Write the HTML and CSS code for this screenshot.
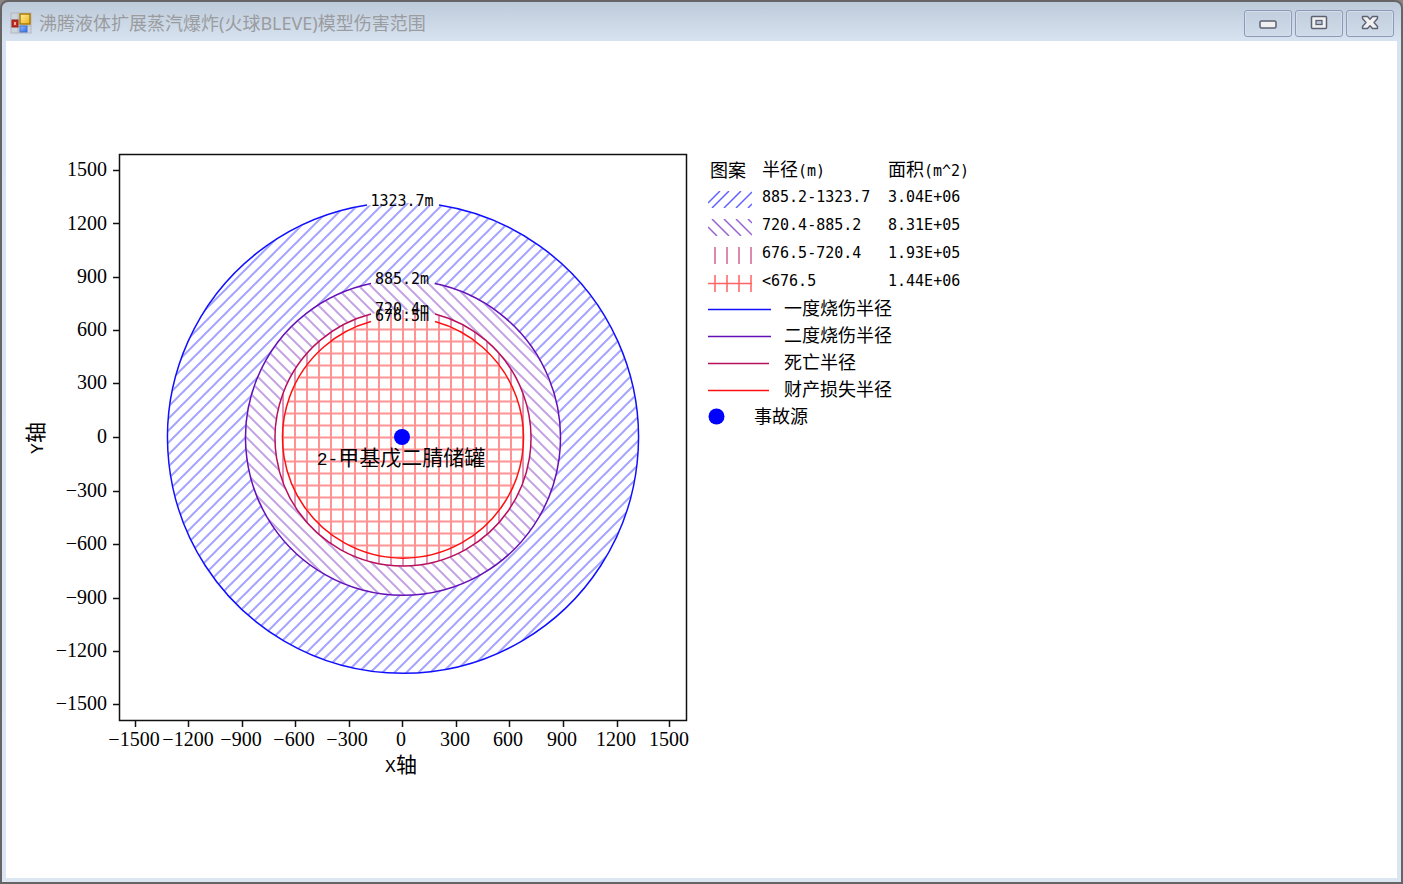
FILE: index.html
```html
<!DOCTYPE html>
<html lang="zh-CN">
<head>
<meta charset="utf-8">
<title>沸腾液体扩展蒸汽爆炸(火球BLEVE)模型伤害范围</title>
<link rel="stylesheet" href="styles.css">
</head>
<body>
<div class="window">
  <header class="titlebar">
    <svg class="app-icon" width="22" height="22" viewBox="0 0 22 22" aria-hidden="true">
      <defs>
        <linearGradient id="gold" x1="0" y1="0" x2="1" y2="1"><stop offset="0" stop-color="#fff0a0"/><stop offset="1" stop-color="#eeb010"/></linearGradient>
        <linearGradient id="sky" x1="0" y1="0" x2="1" y2="1"><stop offset="0" stop-color="#8fbcff"/><stop offset="1" stop-color="#2f6ae0"/></linearGradient>
      </defs>
      <rect x="1" y="1" width="20" height="20" fill="#ccd5de" stroke="#b3b6ba"/>
      <path d="M8 1v20M1 14h20" stroke="#b3b6ba"/>
      <rect x="10" y="2" width="10" height="10" fill="url(#gold)" stroke="#a87c08" stroke-width="1.5"/>
      <rect x="2" y="8" width="6" height="7" fill="#c02a20" stroke="#96201c"/>
      <rect x="4" y="10" width="2" height="3" fill="#f0a8a0"/>
      <rect x="10" y="14" width="7" height="6" fill="url(#sky)" stroke="#3c70d0"/>
    </svg>
    <h1 class="title">沸腾液体扩展蒸汽爆炸(火球BLEVE)模型伤害范围</h1>
    <div class="controls">
      <button class="control" type="button" aria-label="最小化">
        <svg width="18" height="16" viewBox="0 0 18 16"><rect x="1" y="6" width="16" height="7" rx="1.5" fill="#f0f0f0" stroke="#5e6172" stroke-width="1.5"/></svg>
      </button>
      <button class="control" type="button" aria-label="最大化">
        <svg width="18" height="16" viewBox="0 0 18 16"><rect x="1.500" y="1.500" width="15" height="12" rx="1" fill="#f0f0f0" stroke="#5e6172" stroke-width="1.5"/><rect x="6" y="5.500" width="6" height="4" fill="#b9c7d8" stroke="#5e6172" stroke-width="1.3"/></svg>
      </button>
      <button class="control" type="button" aria-label="关闭">
        <svg width="18" height="16" viewBox="0 0 18 16"><path d="M1.500 1.500H6.500L9 4.300 11.500 1.500H16.500V3.500L13 7.500 16.500 11.500V13.500H11.500L9 10.700 6.500 13.500H1.500V11.500L5 7.500 1.500 3.500Z" fill="#f0f0f0" stroke="#5e6172" stroke-width="1.4" stroke-linejoin="round"/></svg>
      </button>
    </div>
  </header>

  <main class="client">
    <svg class="chart" viewBox="20 150 670 630" role="img" aria-label="伤害范围图">
      <defs>
        <pattern id="h-first" x="11" width="12" height="12" patternUnits="userSpaceOnUse"><path class="hatch first" d="M-3 3L3 -3M-3 15L15 -3M9 15L15 9"/></pattern>
        <pattern id="h-second" x="1" width="12" height="12" patternUnits="userSpaceOnUse"><path class="hatch second" d="M-3 9L3 15M-3 -3L15 15M9 -3L15 3"/></pattern>
        <pattern id="h-death" x="1" width="12" height="12" patternUnits="userSpaceOnUse"><path class="hatch death" d="M6 0V12"/></pattern>
        <pattern id="h-loss" x="1" width="12" height="12" patternUnits="userSpaceOnUse"><path class="hatch loss" d="M6 0V12M0 5.500H12"/></pattern>
      </defs>

      <circle cx="403" cy="438" r="235" fill="url(#h-first)"/>
      <circle cx="403" cy="438" r="157" fill="#fff"/>
      <circle cx="403" cy="438" r="157" fill="url(#h-second)"/>
      <circle cx="403" cy="438" r="128" fill="#fff"/>
      <circle cx="403" cy="438" r="128" fill="url(#h-death)"/>
      <circle cx="403" cy="438" r="120" fill="#fff"/>
      <circle cx="403" cy="438" r="120" fill="url(#h-loss)"/>

      <g class="rings">
        <path class="first" d="M367 205A235.500 235.500 0 1 0 439 205"/>
        <path class="second" d="M371 283.500A157.500 157.500 0 1 0 435 283.500"/>
        <path class="death" d="M371 314A128 128 0 1 0 435 314"/>
        <path class="loss" d="M371 321.500A120.500 120.500 0 1 0 435 321.500"/>
      </g>

      <path class="axis" d="M119.500 154.500H686.500V720.500H119.500ZM113 170.500h6M113 223.500h6M113 277.500h6M113 330.500h6M113 383.500h6M113 437.500h6M113 491.500h6M113 544.500h6M113 598.500h6M113 651.500h6M113 704.500h6M135.500 721v6M188.500 721v6M242.500 721v6M295.500 721v6M349.500 721v6M402.500 721v6M456.500 721v6M509.500 721v6M563.500 721v6M617.500 721v6M669.500 721v6"/>

      <g class="ticks y">
        <text x="107" y="176">1500</text><text x="107" y="230">1200</text><text x="107" y="283">900</text><text x="107" y="336">600</text><text x="107" y="389">300</text><text x="107" y="443">0</text><text x="107" y="497">−300</text><text x="107" y="550">−600</text><text x="107" y="604">−900</text><text x="107" y="657">−1200</text><text x="107" y="710">−1500</text>
      </g>
      <g class="ticks">
        <text x="134" y="746">−1500</text><text x="188" y="746">−1200</text><text x="241" y="746">−900</text><text x="294" y="746">−600</text><text x="347" y="746">−300</text><text x="401" y="746">0</text><text x="455" y="746">300</text><text x="508" y="746">600</text><text x="562" y="746">900</text><text x="616" y="746">1200</text><text x="669" y="746">1500</text>
      </g>
      <text class="name" x="401" y="772"><tspan class="wide-mono">X</tspan>轴</text>
      <text class="name" transform="translate(43 438) rotate(-90)"><tspan class="wide-mono">Y</tspan>轴</text>

      <g class="radius">
        <text x="402" y="206">1323.7m</text><text x="402" y="284">885.2m</text><text x="402" y="314">720.4m</text><text x="402" y="321">676.5m</text>
      </g>
      <circle class="source" cx="402" cy="437" r="8"/>
      <text class="name" x="401" y="465"><tspan class="wide-mono">2-</tspan>甲基戊二腈储罐</text>
    </svg>

    <section class="legend">
      <table class="bands">
        <thead><tr><th scope="col" class="pattern">图案</th><th scope="col" class="range">半径<span class="mono">(m)</span></th><th scope="col">面积<span class="mono">(m^2)</span></th></tr></thead>
        <tbody>
          <tr><td><svg class="swatch first" viewBox="0 0 44 17"><path d="M0 12L12 0M4 17L21 0M16 17L33 0M28 17L44 1M40 17L44 13"/></svg></td><td class="mono">885.2-1323.7</td><td class="mono">3.04E+06</td></tr>
          <tr><td><svg class="swatch second" viewBox="0 0 44 17"><path d="M0 8L9 17M4 0L21 17M16 0L33 17M28 0L44 16M40 0L44 4"/></svg></td><td class="mono">720.4-885.2</td><td class="mono">8.31E+05</td></tr>
          <tr><td><svg class="swatch death" viewBox="0 0 44 17"><path d="M7 0V17M19 0V17M31 0V17M43 0V17"/></svg></td><td class="mono">676.5-720.4</td><td class="mono">1.93E+05</td></tr>
          <tr><td><svg class="swatch loss" viewBox="0 0 44 17"><path d="M7 0V17M19 0V17M31 0V17M43 0V17M0 8.500H44"/></svg></td><td class="mono">&lt;676.5</td><td class="mono">1.44E+06</td></tr>
        </tbody>
      </table>
      <ul class="keys">
        <li><svg class="line first" viewBox="0 0 63 8"><path d="M0 6.500H63"/></svg>一度烧伤半径</li>
        <li><svg class="line second" viewBox="0 0 63 8"><path d="M0 6.500H63"/></svg>二度烧伤半径</li>
        <li><svg class="line death" viewBox="0 0 63 8"><path d="M0 6.500H61"/></svg>死亡半径</li>
        <li><svg class="line loss" viewBox="0 0 63 8"><path d="M0 6.500H61"/></svg>财产损失半径</li>
        <li class="point"><svg class="dot" viewBox="0 0 17 21"><circle class="source" cx="8.500" cy="12.500" r="8"/></svg>事故源</li>
      </ul>
    </section>
  </main>
</div>
</body>
</html>
```
FILE: styles.css
```css
* { box-sizing: border-box; }

body {
  margin: 0;
  background: #8a8686;
  color: #000;
  font-family: "Liberation Sans", "Noto Sans CJK SC", sans-serif;
}

.window {
  display: flex;
  flex-direction: column;
  min-height: 100vh;
  padding: 0 4px 4px;
  border: 2px solid #676465;
  border-radius: 8px 8px 0 0;
  background: linear-gradient(#bdcad9, #d7e3f1 39px, #dbe6f2);
}

.titlebar {
  display: flex;
  align-items: center;
  gap: 7px;
  height: 39px;
  padding: 3px 3px 0 4px;
}

.app-icon { flex: none; }

.title {
  flex: 1;
  margin: 0;
  color: #9b9c9f;
  font: 400 18px/24px "Noto Sans", "Noto Sans CJK SC", sans-serif;
  white-space: nowrap;
}

.controls { display: flex; gap: 3px; }

.control {
  display: grid;
  place-items: center;
  width: 48px;
  height: 27px;
  padding: 0;
  border: 1px solid #8c9ab8;
  border-radius: 3px;
  background: linear-gradient(#c1cedd, #cfdbe9);
  box-shadow: inset 0 0 0 1px #d3deea;
}

.client {
  flex: 1;
  display: flex;
  align-items: flex-start;
  gap: 18px;
  padding: 109px 14px 24px;
  background: #fff;
}

.chart { flex: 0 1 670px; min-width: 0; }

.first { stroke: #1010ff; }
.second { stroke: #6410b8; }
.death { stroke: #b8105c; }
.loss { stroke: #ff1010; }

.hatch { fill: none; stroke-width: 2; stroke-opacity: .38; }
.hatch.loss, .hatch.death { stroke-opacity: .45; }
.rings { fill: none; stroke-width: 1.5; }
.axis { fill: none; stroke: #111; stroke-width: 1.5; }
.source { fill: #0000ff; }

.ticks { font: 20px "Liberation Serif", serif; text-anchor: middle; }
.y { text-anchor: end; }
.name { font: 400 21px "Noto Sans CJK SC", sans-serif; text-anchor: middle; }
.wide-mono { font: 18px "Liberation Mono", monospace; }
.radius { font: 15px "DejaVu Sans Mono", monospace; text-anchor: middle; }

.legend { flex: none; padding-top: 5px; font: 18px/24px "Noto Sans CJK SC", sans-serif; }

.bands { border-collapse: collapse; }
.bands th, .bands td { height: 28px; padding: 0; line-height: 24px; text-align: left; font-weight: 400; vertical-align: middle; }
.bands .pattern { width: 54px; padding-left: 2px; }
.bands .range { width: 126px; }
.mono { font-family: "DejaVu Sans Mono", monospace; font-size: 15px; }

.swatch { display: block; width: 44px; height: 17px; margin-top: 4px; fill: none; stroke-width: 1.5; stroke-opacity: .65; }

.keys { margin: -2px 0 0; padding: 0; list-style: none; }
.keys li { display: flex; align-items: center; gap: 13px; height: 27px; }
.line { width: 63px; height: 8px; fill: none; stroke-width: 1.5; }
.keys .point { gap: 29px; }
.dot { width: 17px; height: 21px; }
```
